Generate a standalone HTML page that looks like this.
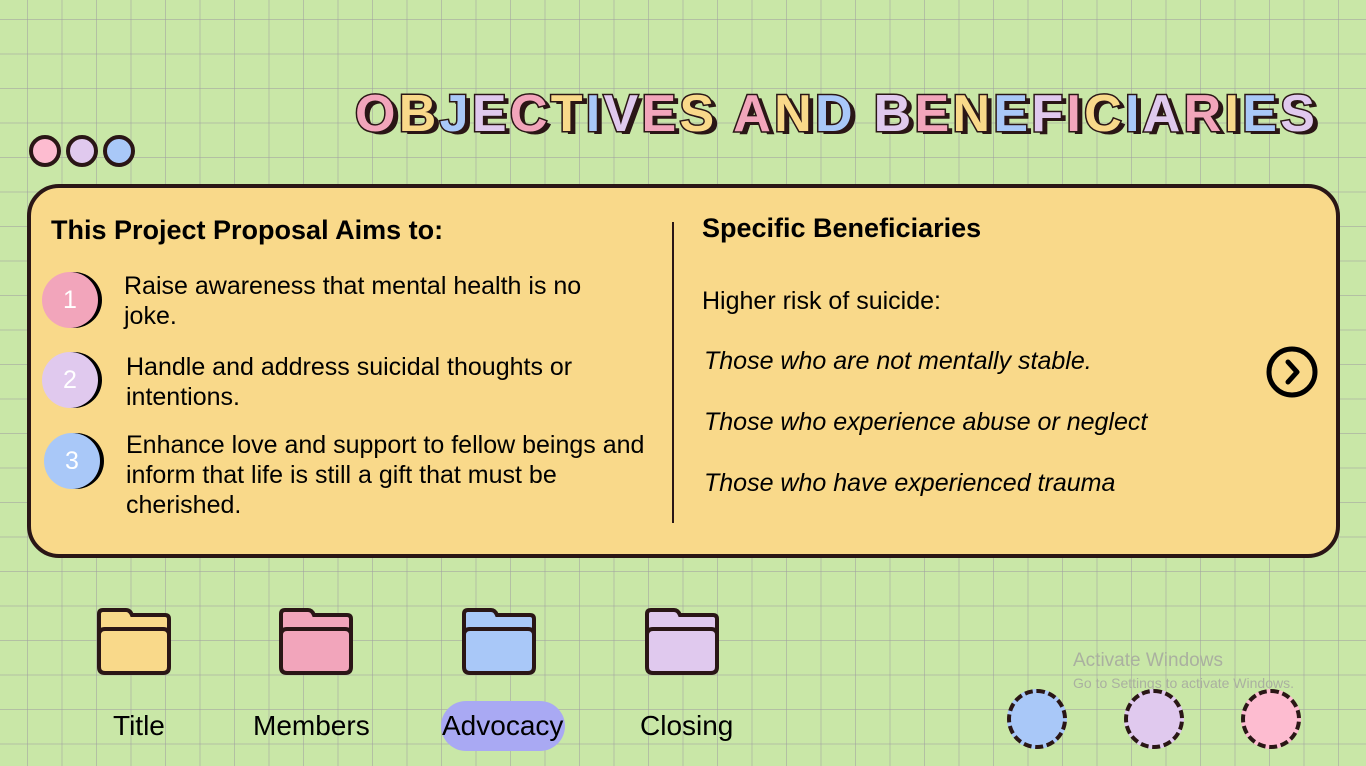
<!DOCTYPE html>
<html><head><meta charset="utf-8"><style>
*{margin:0;padding:0;box-sizing:border-box}
body{width:1366px;height:766px;overflow:hidden;position:relative;font-family:"Liberation Sans",Arial,sans-serif;
background-color:#c9e7a7;
background-image:linear-gradient(to right,rgba(160,160,160,.55) 1px,transparent 1px),linear-gradient(to bottom,rgba(160,160,160,.55) 1px,transparent 1px);
background-size:34.5px 34.5px;background-position:27px 19px}
.a{position:absolute}
.title{left:355px;top:84px;font-size:52px;font-weight:bold;letter-spacing:3.3px;white-space:nowrap;-webkit-text-stroke:3px #2a1616;paint-order:stroke fill}
.title span{text-shadow:5px 3px 0 #2a1616}
.p{color:#f2a5bb}.y{color:#f9d98a}.b{color:#a9c8f8}.l{color:#e0c9ee}
.dot{width:32px;height:32px;border-radius:50%;border:4px solid #2a1616;top:135px}
.card{left:27px;top:184px;width:1313px;height:374px;border:4px solid #2a1616;border-radius:32px;background:#f9d98a}
.h{font-size:27px;font-weight:bold;color:#000}
.num{width:56px;height:56px;border-radius:50%;color:#fff;font-size:25px;display:flex;align-items:center;justify-content:center;box-shadow:4px 0 0 #000}
.t{font-size:25px;line-height:30px;color:#000}
.it{font-size:25px;font-style:italic;color:#000}
.lab{font-size:28px;color:#000;top:710px}
.cc{width:60px;height:60px;border-radius:50%;border:4px dashed #2a1616;top:689px}
</style></head><body>
<div class="a title"><span class="p">O</span><span class="y">B</span><span class="b">J</span><span class="l">E</span><span class="p">C</span><span class="y">T</span><span class="b">I</span><span class="l">V</span><span class="p">E</span><span class="y">S</span> <span class="p">A</span><span class="y">N</span><span class="b">D</span> <span class="l">B</span><span class="p">E</span><span class="y">N</span><span class="b">E</span><span class="l">F</span><span class="p">I</span><span class="y">C</span><span class="b">I</span><span class="l">A</span><span class="p">R</span><span class="y">I</span><span class="b">E</span><span class="l">S</span></div>
<div class="a dot" style="left:29px;background:#fdbcd0"></div>
<div class="a dot" style="left:66px;background:#e0c9ee"></div>
<div class="a dot" style="left:103px;background:#a9c8f8"></div>
<div class="a card"></div>
<div class="a h" style="left:51px;top:215px">This Project Proposal Aims to:</div>
<div class="a num" style="left:42px;top:272px;background:#f2a5bb">1</div>
<div class="a t" style="left:124px;top:271px;width:520px">Raise awareness that mental health is no<br>joke.</div>
<div class="a num" style="left:42px;top:352px;background:#e0c9ee">2</div>
<div class="a t" style="left:126px;top:352px;width:520px">Handle and address suicidal thoughts or<br>intentions.</div>
<div class="a num" style="left:44px;top:433px;background:#a9c8f8">3</div>
<div class="a t" style="left:126px;top:430px;width:540px">Enhance love and support to fellow beings and<br>inform that life is still a gift that must be<br>cherished.</div>
<div class="a" style="left:672px;top:222px;width:2px;height:301px;background:#2a1616"></div>
<div class="a h" style="left:702px;top:213px">Specific Beneficiaries</div>
<div class="a t" style="left:702px;top:286px">Higher risk of suicide:</div>
<div class="a it" style="left:704px;top:347px">Those who are not mentally stable.</div>
<div class="a it" style="left:704px;top:408px">Those who experience abuse or neglect</div>
<div class="a it" style="left:704px;top:469px">Those who have experienced trauma</div>
<svg class="a" style="left:1264px;top:346px" width="56" height="52" viewBox="0 0 56 52"><circle cx="28" cy="26" r="23" fill="none" stroke="#000" stroke-width="5"/><path d="M24 16 L33 26 L24 36" fill="none" stroke="#000" stroke-width="5" stroke-linecap="round" stroke-linejoin="round"/></svg>
<svg class="a" style="left:96px;top:607px" width="76" height="70"><path d="M3 55 V7 Q3 3 7 3 H30 Q34 3 36 8 H69 Q73 8 73 12 V60 Q73 66 67 66 H9 Q3 66 3 60Z" fill="#f9d98a" stroke="#2a1616" stroke-width="4"/><path d="M3 28 Q3 22 9 22 H67 Q73 22 73 28" fill="none" stroke="#2a1616" stroke-width="4"/></svg>
<svg class="a" style="left:278px;top:607px" width="76" height="70"><path d="M3 55 V7 Q3 3 7 3 H30 Q34 3 36 8 H69 Q73 8 73 12 V60 Q73 66 67 66 H9 Q3 66 3 60Z" fill="#f2a5bb" stroke="#2a1616" stroke-width="4"/><path d="M3 28 Q3 22 9 22 H67 Q73 22 73 28" fill="none" stroke="#2a1616" stroke-width="4"/></svg>
<svg class="a" style="left:461px;top:607px" width="76" height="70"><path d="M3 55 V7 Q3 3 7 3 H30 Q34 3 36 8 H69 Q73 8 73 12 V60 Q73 66 67 66 H9 Q3 66 3 60Z" fill="#a9c8f8" stroke="#2a1616" stroke-width="4"/><path d="M3 28 Q3 22 9 22 H67 Q73 22 73 28" fill="none" stroke="#2a1616" stroke-width="4"/></svg>
<svg class="a" style="left:644px;top:607px" width="76" height="70"><path d="M3 55 V7 Q3 3 7 3 H30 Q34 3 36 8 H69 Q73 8 73 12 V60 Q73 66 67 66 H9 Q3 66 3 60Z" fill="#e0c9ee" stroke="#2a1616" stroke-width="4"/><path d="M3 28 Q3 22 9 22 H67 Q73 22 73 28" fill="none" stroke="#2a1616" stroke-width="4"/></svg>
<div class="a" style="left:441px;top:701px;width:124px;height:50px;border-radius:25px;background:#a9a9f3"></div>
<div class="a lab" style="left:113px">Title</div>
<div class="a lab" style="left:253px">Members</div>
<div class="a lab" style="left:442px">Advocacy</div>
<div class="a lab" style="left:640px">Closing</div>
<div class="a" style="left:1073px;top:650px;font-size:19px;color:#aab0a0">Activate Windows</div>
<div class="a" style="left:1073px;top:675px;font-size:14px;color:#aab0a0">Go to Settings to activate Windows.</div>
<div class="a cc" style="left:1007px;background:#a9c8f8"></div>
<div class="a cc" style="left:1124px;background:#e0c9ee"></div>
<div class="a cc" style="left:1241px;background:#fdbcd0"></div>
</body></html>
